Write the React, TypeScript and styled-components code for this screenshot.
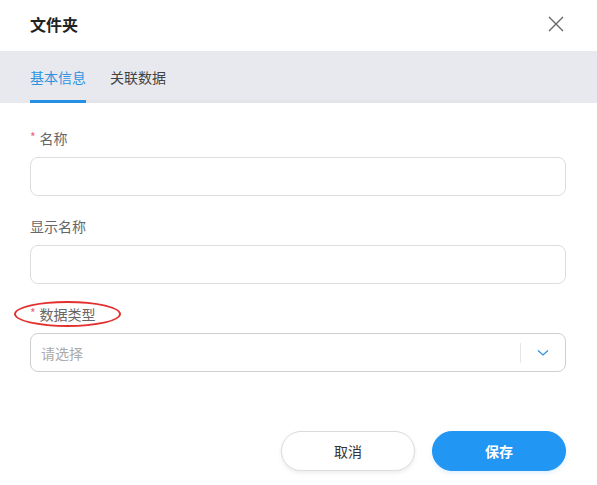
import styled, { createGlobalStyle } from 'styled-components'

const GlobalStyle = createGlobalStyle`
	html, body {
		margin: 0;
		padding: 0;
		background: #fff;
	}
	body {
		font-family: "Noto Sans CJK SC", "Noto Sans", sans-serif;
		color: #333;
	}
`

const CloseIcon = () => (
	<svg width="16" height="16" viewBox="0 0 16 16">
		<path d="M1 1 L15 15 M15 1 L1 15" stroke="#666" strokeWidth="1.4" fill="none" />
	</svg>
)

const Chevron = () => (
	<svg width="12" height="8" viewBox="0 0 12 8">
		<path d="M1 1.5 L6 6 L11 1.5" stroke="#2b8fe3" strokeWidth="1.2" fill="none" />
	</svg>
)

export default function App() {
	return (
		<>
			<GlobalStyle />
			<Dialog>
				<Header>
					<Title>文件夹</Title>
					<CloseButton>
						<CloseIcon />
					</CloseButton>
				</Header>
				<TabBar>
					<TabList>
						<Tab $active>基本信息</Tab>
						<Tab>关联数据</Tab>
					</TabList>
				</TabBar>
				<Body>
					<Field>
						<Label>
							<Required>*</Required>名称
						</Label>
						<Input />
					</Field>
					<Field>
						<Label>显示名称</Label>
						<Input />
					</Field>
					<Field>
						<Label>
							<Required>*</Required>数据类型
							<Mark />
						</Label>
						<Select>
							<Placeholder>请选择</Placeholder>
							<Divider />
							<Arrow>
								<Chevron />
							</Arrow>
						</Select>
					</Field>
				</Body>
				<Footer>
					<Button>取消</Button>
					<Button $primary>保存</Button>
				</Footer>
			</Dialog>
		</>
	)
}

const Dialog = styled.div`
	width: 597px;
	height: 485px;
	display: flex;
	flex-direction: column;
	background: #fff;
	overflow: hidden;
`

const Header = styled.div`
	height: 51px;
	display: flex;
	align-items: center;
	justify-content: space-between;
	padding: 0 33px 0 30px;
	box-sizing: border-box;
`

const Title = styled.div`
	font-size: 16px;
	font-weight: 700;
	color: #222;
	line-height: 20px;
	margin-top: -3px;
`

const CloseButton = styled.div`
	width: 16px;
	height: 16px;
	display: flex;
	margin-top: -4px;
`

const TabBar = styled.div`
	height: 52px;
	background: #e8e9ee;
	padding: 0 37px 0 30px;
	box-sizing: border-box;
	display: flex;
`

const TabList = styled.div`
	flex: 1;
	display: flex;
	gap: 24px;
	border-bottom: 3px solid #e3e4ea;
`

const Tab = styled.div<{ $active?: boolean }>`
	display: flex;
	align-items: center;
	font-size: 14px;
	line-height: 20px;
	padding-top: 3px;
	color: ${p => (p.$active ? '#2f93e0' : '#444')};
	margin-bottom: -3px;
	border-bottom: 3px solid ${p => (p.$active ? '#2690e4' : 'transparent')};
`

const Body = styled.div`
	flex: 1;
	padding: 25px 31px 0 30px;
`

const Field = styled.div`
	margin-bottom: 20px;
`

const Label = styled.div`
	position: relative;
	font-size: 14px;
	line-height: 20px;
	color: #666;
	margin-bottom: 9px;
	display: flex;
	align-items: center;
`

const Required = styled.span`
	color: #f0607a;
	font-size: 12px;
	margin-right: 4px;
	margin-top: -3px;
`

const Mark = styled.span`
	position: absolute;
	left: -16px;
	top: -3px;
	width: 107px;
	height: 26px;
	border: 2.5px solid #e3302f;
	border-radius: 50%;
	box-sizing: border-box;
`

const Input = styled.div`
	height: 39px;
	border: 1px solid #dddddd;
	border-radius: 8px;
	box-sizing: border-box;
	background: #fff;
`

const Select = styled.div`
	height: 39px;
	border: 1px solid #cfcfcf;
	border-radius: 8px;
	box-sizing: border-box;
	display: flex;
	align-items: center;
	padding-left: 10px;
`

const Placeholder = styled.span`
	flex: 1;
	font-size: 14px;
	color: #aaa;
`

const Divider = styled.span`
	width: 1px;
	height: 20px;
	background: #e6e6e6;
`

const Arrow = styled.span`
	width: 43px;
	display: flex;
	justify-content: center;
	padding-right: 1px;
`

const Footer = styled.div`
	display: flex;
	justify-content: flex-end;
	gap: 17px;
	padding: 0 31px 14px 0;
`

const Button = styled.div<{ $primary?: boolean }>`
	width: 134px;
	height: 40px;
	border-radius: 20px;
	box-sizing: border-box;
	display: flex;
	align-items: center;
	justify-content: center;
	font-size: 14px;
	font-weight: ${p => (p.$primary ? 700 : 400)};
	color: ${p => (p.$primary ? '#fff' : '#333')};
	background: ${p => (p.$primary ? '#2196f3' : '#fff')};
	border: 1px solid ${p => (p.$primary ? '#2196f3' : '#dcdcdc')};
	box-shadow: ${p => (p.$primary ? '0 2px 4px rgba(33,150,243,0.15)' : '0 2px 4px rgba(0,0,0,0.08)')};
`
